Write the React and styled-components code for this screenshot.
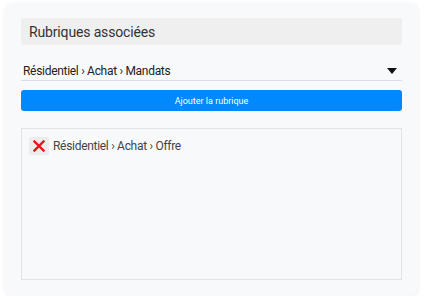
import React from "react";
import styled, { createGlobalStyle } from "styled-components";

const GlobalStyle = createGlobalStyle`
  body {
    margin: 0;
    background: #ffffff;
    font-family: Roboto, "Noto Sans", sans-serif;
  }
`;

const Card = styled.div`
  box-sizing: border-box;
  width: 413px;
  height: 293px;
  margin: 3px 0 0 5px;
  padding: 15px 16px 16px 16px;
  background: #f8f9fb;
  border-radius: 8px;
  box-shadow: 0 1px 4px rgba(0, 0, 0, 0.08);
  display: flex;
  flex-direction: column;
`;

const Header = styled.div`
  height: 27px;
  background: #efefef;
  border-radius: 2px;
  display: flex;
  align-items: center;
  padding-left: 8px;
  font-size: 14px;
  letter-spacing: -0.15px;
  color: #333;
`;

const Select = styled.div`
  margin-top: 17px;
  height: 18px;
  border-bottom: 1px solid #dcdde8;
  display: flex;
  align-items: center;
  justify-content: space-between;
  padding: 0 5px 0 2px;
  font-size: 12px;
  letter-spacing: -0.3px;
  color: #222;
`;

const Arrow = styled.span`
  width: 0;
  height: 0;
  border-left: 5px solid transparent;
  border-right: 5px solid transparent;
  border-top: 6px solid #111;
`;

const Button = styled.div`
  margin-top: 9px;
  height: 21px;
  background: #0088ff;
  border-radius: 3px;
  color: #fff;
  font-size: 9px;
  display: flex;
  align-items: center;
  justify-content: center;
`;

const List = styled.div`
  margin-top: 17px;
  flex: 1;
  border: 1px solid #e2e3e6;
  padding: 8px 7px;
`;

const Item = styled.div`
  display: flex;
  align-items: center;
  gap: 4px;
  font-size: 12px;
  letter-spacing: -0.3px;
  color: #444;
`;

const Remove = styled.span`
  width: 20px;
  height: 18px;
  background: #ececec;
  border-radius: 2px;
  display: flex;
  align-items: center;
  justify-content: center;
`;

const items = ["Résidentiel › Achat › Offre"];

export default function App() {
  return (
    <>
      <GlobalStyle />
      <Card>
        <Header>Rubriques associées</Header>
        <Select>
          <span>Résidentiel › Achat › Mandats</span>
          <Arrow />
        </Select>
        <Button>Ajouter la rubrique</Button>
        <List>
          {items.map((it) => (
            <Item key={it}>
              <Remove>
                <svg width="12" height="12" viewBox="0 0 12 12">
                  <path d="M1.5 1.5 L10.5 10.5 M10.5 1.5 L1.5 10.5" stroke="#e8141a" strokeWidth="2.4" strokeLinecap="square" />
                </svg>
              </Remove>
              {it}
            </Item>
          ))}
        </List>
      </Card>
    </>
  );
}
